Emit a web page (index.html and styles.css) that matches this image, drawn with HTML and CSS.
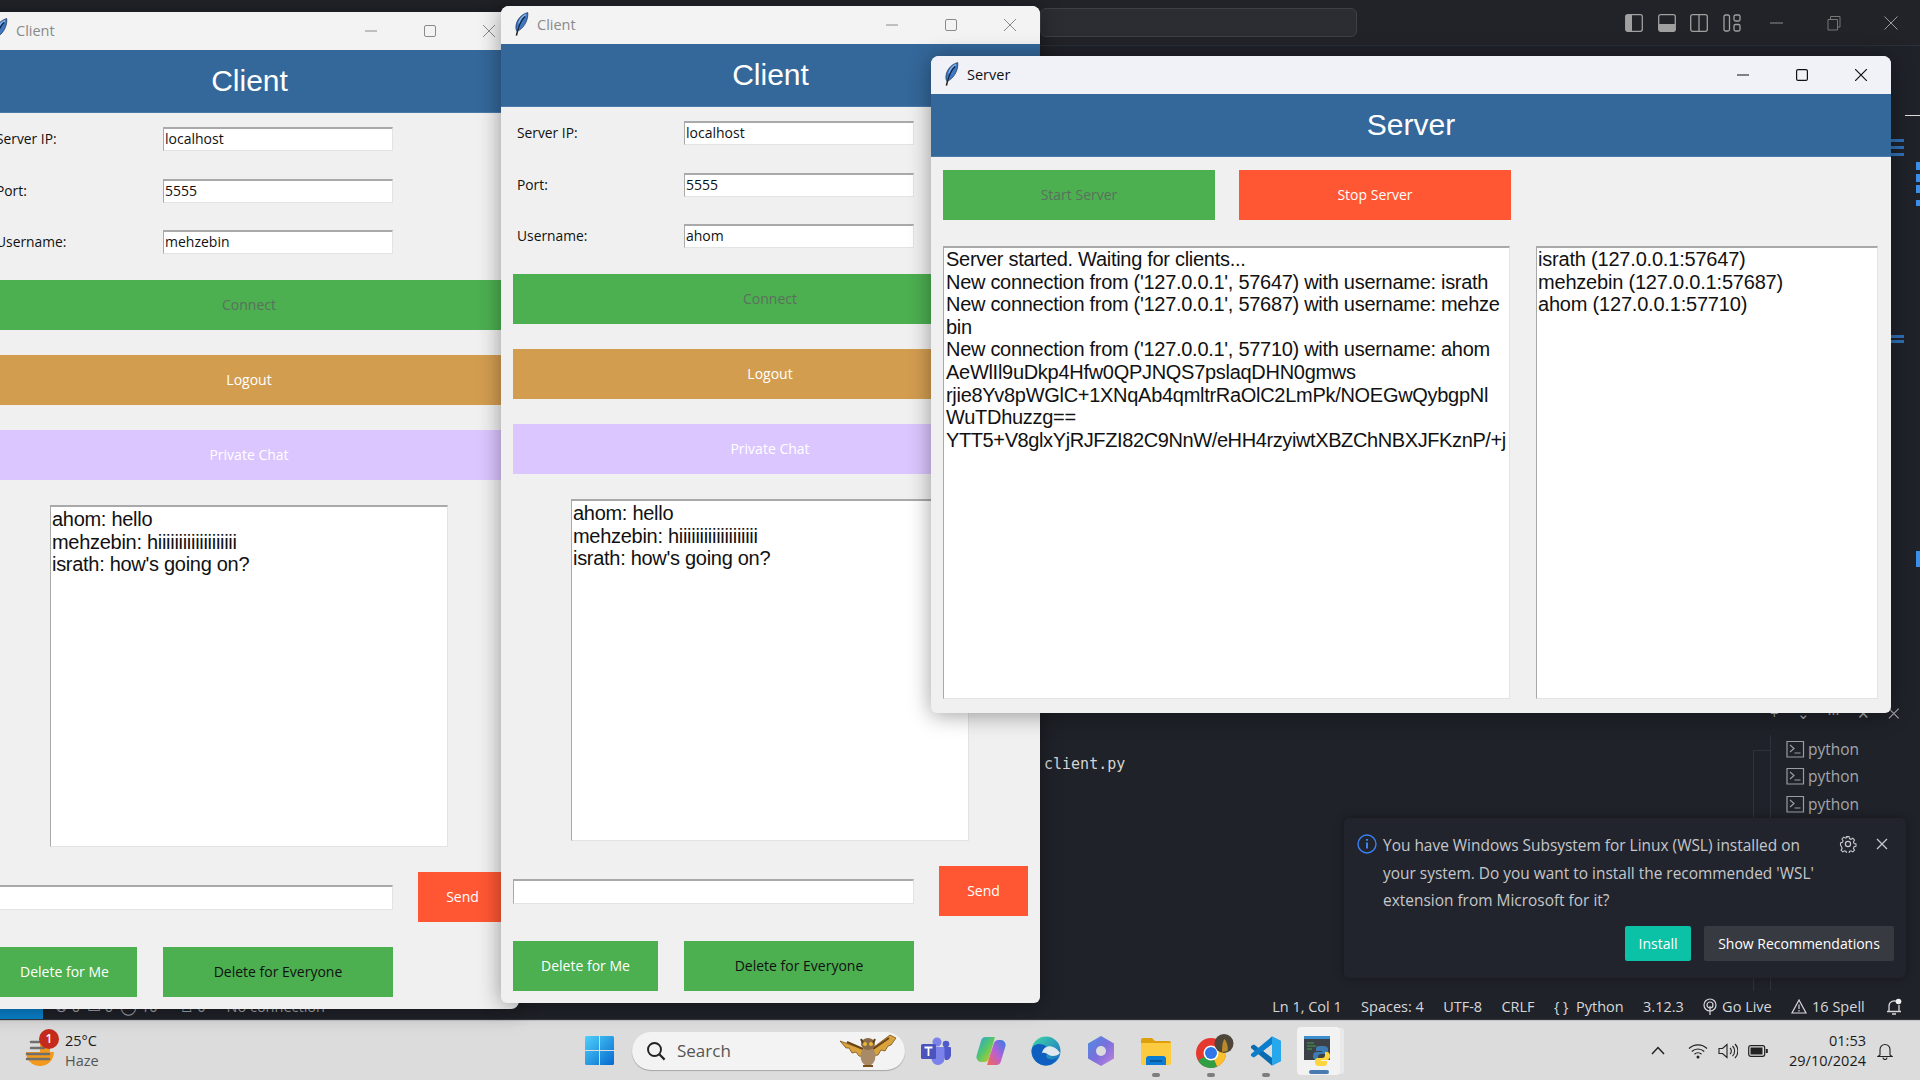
FILE: index.html
```html
<!DOCTYPE html>
<html lang="en">
<head>
  <meta charset="UTF-8">
  <title>Client and Server</title>
  <link rel="stylesheet" href="styles.css">
</head>
<body>

<svg class="defs" width="0" height="0">
  <defs>
    <symbol id="feather" viewBox="0 0 16 24">
      <path d="M13.800 .6C8 2 3 7 2 13.500c-.4 2.600 0 4.600 1 5.800C8.500 17.500 14.500 9.500 13.800 .6z" fill="#3f78c4" stroke="#1c2f4c" stroke-width=".7"/>
      <path d="M12 2.500C9.500 3.600 6 7 4.800 11.500" stroke="#8db8ea" stroke-width="1.300" fill="none"/>
      <path d="M11 4.500C7.500 8 5 13 3.400 19.800" stroke="#12233c" stroke-width="1.100" fill="none"/>
      <path d="M3.500 19L2.400 23.600" stroke="#222" stroke-width="1.500"/>
    </symbol>
    <symbol id="term" viewBox="0 0 20 20">
      <path d="M1 2.500h16.500v15.500h-16.500zM4 6l4 3.500-4 3.500M8.500 14h6" fill="none" stroke="#9a9da3" stroke-width="1.200"/>
    </symbol>
  </defs>
</svg>

<div class="desktop">
  <div class="vscode">
    <div class="vs-titlebar">
      <div class="vs-search"></div>
      <div class="vs-layout">
        <svg width="18" height="18" viewBox="0 0 18 18"><rect x=".7" y=".7" width="16.600" height="16.600" rx="2" fill="none" stroke="#a0a0a0" stroke-width="1.300"/><rect x="1" y="1" width="6" height="16" fill="#a0a0a0"/></svg>
        <svg width="18" height="18" viewBox="0 0 18 18"><rect x=".7" y=".7" width="16.600" height="16.600" rx="2" fill="none" stroke="#a0a0a0" stroke-width="1.300"/><rect x="1" y="10" width="16" height="7" fill="#a0a0a0"/></svg>
        <svg width="18" height="18" viewBox="0 0 18 18"><rect x=".7" y=".7" width="16.600" height="16.600" rx="2" fill="none" stroke="#a0a0a0" stroke-width="1.300"/><path d="M9 1v16" stroke="#a0a0a0" stroke-width="1.300"/></svg>
        <svg width="18" height="18" viewBox="0 0 18 18"><g fill="none" stroke="#a0a0a0" stroke-width="1.300"><rect x="1" y="1" width="5.500" height="16" rx="1.500"/><rect x="11" y="1" width="6" height="6" rx="1.500"/><rect x="11" y="10.500" width="6" height="6.500" rx="1.500"/></g></svg>
      </div>
      <div class="vs-controls">
        <svg width="14" height="14" viewBox="0 0 14 14"><path d="M0 7h13" stroke="#8e8e8e"/></svg>
        <svg width="14" height="16" viewBox="0 0 14 16"><path d="M1 4.500h9.500v10.500h-9.500zM3.500 4.500v-3h9.500v10.500h-2.500" fill="none" stroke="#777"/></svg>
        <svg width="14" height="14" viewBox="0 0 14 14"><path d="M.5 .5l13 13M13.500 .5l-13 13" stroke="#9a9a9a"/></svg>
      </div>
    </div>

    <div class="vs-main">
      <div class="minimap"></div>
      <div class="term-cmd">client.py</div>
      <div class="term-actions">
        <span>+</span><span>⌄</span><span>···</span><span>✕</span>
        <svg width="13" height="13" viewBox="0 0 13 13"><path d="M1 1l11 11M12 1l-11 11" stroke="#a9abb0" stroke-width="1.200"/></svg>
      </div>
      <div class="term-list">
        <div class="term-row"><svg width="20" height="20"><use href="#term"/></svg>python</div>
        <div class="term-row"><svg width="20" height="20"><use href="#term"/></svg>python</div>
        <div class="term-row"><svg width="20" height="20"><use href="#term"/></svg>python</div>
      </div>

      <div class="toast">
        <svg class="toast-info" width="20" height="20" viewBox="0 0 20 20"><circle cx="10" cy="10" r="9" fill="none" stroke="#3b82f6" stroke-width="1.400"/><path d="M10 8.500v6M10 5v1.800" stroke="#3b82f6" stroke-width="2"/></svg>
        <p class="toast-text">You have Windows Subsystem for Linux (WSL) installed on<br>your system. Do you want to install the recommended 'WSL'<br>extension from Microsoft for it?</p>
        <svg class="toast-gear" width="18" height="18" viewBox="0 0 18 18"><g fill="none" stroke="#c6c8cc" stroke-width="1.200"><circle cx="9" cy="9" r="2.600"/><path d="M7.600 1h2.800l.4 2.300 1.700.8 2-1.200 1.900 2-1.200 2 .7 1.700 2.100.6v2.500l-2.100.6-.7 1.700 1.200 2-1.900 1.900-2-1.200-1.700.7-.4 2.300h-2.800l-.4-2.300-1.700-.7-2 1.200-1.900-1.900 1.200-2-.7-1.700L1 10.500V8l2.100-.6.700-1.700-1.200-2 1.900-2 2 1.200 1.700-.8z" transform="translate(.6 .6) scale(.91)"/></g></svg>
        <svg class="toast-close" width="12" height="12" viewBox="0 0 12 12"><path d="M1 1l10 10M11 1l-10 10" stroke="#c6c8cc" stroke-width="1.300"/></svg>
        <div class="toast-actions">
          <button class="btn-install">Install</button>
          <button class="btn-recommend">Show Recommendations</button>
        </div>
      </div>
    </div>

    <div class="statusbar">
      <div class="status-left">
        <div class="remote"></div>
        <div class="status-dim">
          <span>⊗ 0</span><span>▭ 0</span><span>◯ 10</span><span class="status-ports">♙ 0</span><span>No connection</span>
        </div>
      </div>
      <div class="status-right">
        <span>Ln 1, Col 1</span>
        <span>Spaces: 4</span>
        <span>UTF-8</span>
        <span>CRLF</span>
        <span>{ }&nbsp; Python</span>
        <span>3.12.3</span>
        <span class="status-icon"><svg width="14" height="18" viewBox="0 0 14 18"><g fill="none" stroke="#d6d7da" stroke-width="1.200"><circle cx="7" cy="7" r="6"/><circle cx="7" cy="7" r="3"/><path d="M7 8v9"/></g></svg>Go Live</span>
        <span class="status-icon"><svg width="16" height="15" viewBox="0 0 16 15"><path d="M8 1l7 13h-14zM8 5.500v4.500M8 11v1.500" fill="none" stroke="#d6d7da" stroke-width="1.200"/></svg>16 Spell</span>
        <svg class="status-bell" width="16" height="18" viewBox="0 0 16 18"><path d="M3 13V8a5 5 0 0 1 8-4M13 7v6M1 13.500h14M6 16h4" fill="none" stroke="#d6d7da" stroke-width="1.300"/><circle cx="12.500" cy="3.500" r="2.800" fill="#f0f0f0"/></svg>
      </div>
    </div>
  </div>

  <div class="taskbar">
    <div class="weather">
      <div class="weather-icon">
        <svg width="32" height="32" viewBox="0 0 32 32"><path d="M2 13h28a14 14 0 0 1-28 0z" fill="#f39a1d"/><path d="M16 5h10v8h-10z" fill="#f39a1d"/><g stroke="#6f6f6f" stroke-width="2.600" stroke-linecap="round"><path d="M7 3h8M7 9h13M3 15h22M3 20h22"/></g></svg>
        <span class="badge">1</span>
      </div>
      <div class="weather-text"><span>25°C</span><span class="weather-sub">Haze</span></div>
    </div>

    <div class="task-center">
      <svg class="winlogo" width="29" height="29" viewBox="0 0 29 29"><defs><linearGradient id="wg" x1="0" y1="0" x2="1" y2="1"><stop offset="0" stop-color="#4fd0fb"/><stop offset="1" stop-color="#0569ce"/></linearGradient></defs><path d="M0 1.500a1.500 1.500 0 0 1 1.500-1.500H14v14H0zM15 0h12.500A1.500 1.500 0 0 1 29 1.500V14H15zM0 15h14v14H1.500A1.500 1.500 0 0 1 0 27.500zM15 15h14v12.500a1.500 1.500 0 0 1-1.500 1.500H15z" fill="url(#wg)"/></svg>

      <div class="search">
        <svg width="20" height="20" viewBox="0 0 20 20"><circle cx="8.500" cy="8.500" r="6.500" fill="none" stroke="#222" stroke-width="1.900"/><path d="M13.300 13.300l5.300 5.300" stroke="#222" stroke-width="2.200"/></svg>
        <span class="search-label">Search</span>
        <svg class="owl" width="58" height="36" viewBox="0 0 58 36"><path d="M27 17L1 8l6 7 3 0 3 5 4-1 3 4 8 1zM31 17L51 2l6 3-5 7-3 1-3 5-4-1-3 5-8 1z" fill="#d8a33c" stroke="#7a4f1c" stroke-width=".8"/><path d="M24 16L8 9M34 16L50 5" stroke="#6b4216" stroke-width="2"/><ellipse cx="29" cy="23" rx="7.500" ry="10" fill="#a98a66"/><ellipse cx="29" cy="11" rx="7" ry="6" fill="#8a6a48"/><path d="M22 6l2 4M36 6l-2 4" stroke="#5a3d20" stroke-width="2"/><circle cx="26" cy="11" r="2" fill="#e8b838"/><circle cx="32" cy="11" r="2" fill="#e8b838"/><path d="M24 33h10" stroke="#7a4f1c" stroke-width="2"/></svg>
      </div>

      <div class="apps">
        <div class="app">
          <svg width="30" height="28" viewBox="0 0 30 28"><circle cx="16" cy="5" r="4.500" fill="#7b83eb"/><circle cx="25" cy="7" r="3.300" fill="#5059c9"/><path d="M20 10h9a1 1 0 0 1 1 1v7a5 5 0 0 1-6 5z" fill="#5059c9"/><path d="M9 10h13a1.500 1.500 0 0 1 1.500 1.500V21a6.500 6.500 0 0 1-13 1z" fill="#7b83eb"/><rect x="0" y="7" width="15" height="15" rx="1.500" fill="#4b53bc"/><path d="M3.500 10.500h8M7.500 10.500v8.500" stroke="#fff" stroke-width="1.800"/></svg>
        </div>
        <div class="app">
          <svg width="30" height="30" viewBox="0 0 30 30"><defs><linearGradient id="cp1" x1="0" y1="0" x2="1" y2="1"><stop offset="0" stop-color="#1fa2e8"/><stop offset=".5" stop-color="#5ac864"/><stop offset="1" stop-color="#f5c21b"/></linearGradient><linearGradient id="cp2" x1="1" y1="0" x2="0" y2="1"><stop offset="0" stop-color="#2d7fe8"/><stop offset=".5" stop-color="#b75fd6"/><stop offset="1" stop-color="#f7684a"/></linearGradient></defs><path d="M10 1h9l-6 22a5 5 0 0 1-5 3H5a5 5 0 0 1-4.500-6L5 5a5 5 0 0 1 5-4z" fill="url(#cp1)"/><path d="M20 29h-9l7-22a5 5 0 0 1 5-3h2a5 5 0 0 1 4.500 6l-4.500 15a5 5 0 0 1-5 4z" fill="url(#cp2)"/></svg>
        </div>
        <div class="app">
          <svg width="30" height="30" viewBox="0 0 30 30"><defs><linearGradient id="eg" x1="0" y1="0" x2="1" y2="1"><stop offset="0" stop-color="#40d8a8"/><stop offset="1" stop-color="#1668c8"/></linearGradient></defs><circle cx="15" cy="15" r="14.500" fill="url(#eg)"/><path d="M.5 15C1 8 8 7 13 9c4 2 5 6 3 9-1 2-1 4 2 5 3 1 7 0 9-2-3 5-7 8.500-12 8.500C7 29.500.5 23 .5 15z" fill="#0f5fc0"/><path d="M11 17c1-5 6-8 11-6 3 1 5 3 7 6-2 3-8 4-11 2-2-1-4-3-7-2z" fill="#dfe8ee"/></svg>
        </div>
        <div class="app">
          <svg width="28" height="30" viewBox="0 0 28 30"><defs><linearGradient id="mg" x1="0" y1="0" x2="1" y2="1"><stop offset="0" stop-color="#4a8ee0"/><stop offset=".5" stop-color="#7a6fdc"/><stop offset="1" stop-color="#c583dc"/></linearGradient></defs><path d="M14 0l13 7.500v15L14 30 1 22.500v-15z" fill="url(#mg)"/><circle cx="14" cy="15" r="5" fill="#dcdcdc"/></svg>
        </div>
        <div class="app app-open">
          <svg width="30" height="28" viewBox="0 0 30 28"><path d="M0 3a2 2 0 0 1 2-2h9l3 3h14a2 2 0 0 1 2 2v3H0z" fill="#dd9f0a"/><path d="M0 6h30v20a2 2 0 0 1-2 2H2a2 2 0 0 1-2-2z" fill="#fccb3f"/><path d="M5 22a3 3 0 0 1 3-3h14a3 3 0 0 1 3 3v6H5z" fill="#0a7cd4"/><path d="M9 24h12" stroke="#0a4f8a" stroke-width="1.500"/></svg>
        </div>
        <div class="app app-open app-chrome">
          <svg width="38" height="34" viewBox="0 0 38 34"><circle cx="15" cy="19" r="15" fill="#e5392f"/><path d="M15 19L28 11a15 15 0 0 1-7 21.700z" fill="#fbc02d"/><path d="M15 19L21 32.700A15 15 0 0 1 2 26.500z" fill="#2f9e44"/><circle cx="15" cy="19" r="7.500" fill="#fff"/><circle cx="15" cy="19" r="6" fill="#2f76e8"/><circle cx="28" cy="9.500" r="9.500" fill="#4e463a"/><path d="M26 18c0-5 .5-11 2.500-13 2 2 4 8 3 12z" fill="#b88a2a"/></svg>
        </div>
        <div class="app app-open">
          <svg width="30" height="30" viewBox="0 0 30 30"><path d="M21 .5L30 5v20l-9 4.500L8 16.500z" fill="#0c7dcc"/><path d="M21 .5L30 5v20l-9 4.500z" fill="#27a7ec"/><path d="M21 8v14l-9-7z" fill="#dcdcdc"/><path d="M0 10l3-1.500L21 22v7.500L0 12z" fill="#0a6bb0"/><path d="M0 20l3 1.500L21 8V.5L0 18z" fill="#0c7dcc"/></svg>
        </div>
        <div class="app-active">
          <svg width="30" height="30" viewBox="0 0 30 30"><rect width="26" height="24" fill="#3c4147"/><rect width="26" height="3" fill="#3b8ed0"/><path d="M3 7h7M3 10h9M3 13h5" stroke="#3fa34d"/><path d="M16 10c-4 0-4 2-4 3v2h6v1h-6c-2 0-3 2-3 4s1 4 3 4h2v-3c0-2 1-3 3-3h4c2 0 3-1 3-3v-2c0-2-2-3-4-3z" fill="#3d7cb3"/><path d="M19 30c4 0 4-2 4-3v-2h-6v-1h6c2 0 3-2 3-4s-1-4-3-4h-2v3c0 2-1 3-3 3h-4c-2 0-3 1-3 3v2c0 2 2 3 4 3z" fill="#fcd53f"/></svg>
        </div>
      </div>
    </div>

    <div class="tray">
      <svg width="14" height="9" viewBox="0 0 14 9"><path d="M1 8l6-6.500L13 8" fill="none" stroke="#222" stroke-width="1.500"/></svg>
      <svg class="tray-wifi" width="20" height="16" viewBox="0 0 20 16"><g fill="none" stroke="#222" stroke-width="1.200"><path d="M1 5.500a13 13 0 0 1 18 0M3.800 8.500a9 9 0 0 1 12.400 0M6.500 11.200a5 5 0 0 1 7 0"/></g><circle cx="10" cy="14" r="1.500" fill="#222"/></svg>
      <svg width="20" height="16" viewBox="0 0 20 16"><g fill="none" stroke="#222" stroke-width="1.100"><path d="M1 5.500h3.500L9 1.500v13L4.500 10.500H1zM12 5a4 4 0 0 1 0 6M14.500 3a7 7 0 0 1 0 10M17 1a10 10 0 0 1 0 14"/></g></svg>
      <svg width="20" height="12" viewBox="0 0 20 12"><rect x=".7" y=".7" width="16" height="10.600" rx="2" fill="none" stroke="#222" stroke-width="1.200"/><rect x="2.500" y="2.500" width="12" height="7" fill="#222"/><rect x="17.800" y="4" width="2" height="4" fill="#222"/></svg>
      <div class="clock"><span>01:53</span><span>29/10/2024</span></div>
      <svg width="16" height="18" viewBox="0 0 16 18"><path d="M3 13V7.500a5 5 0 0 1 10 0V13l2 1.500H1zM6 15.500a2 2 0 0 0 4 0" fill="none" stroke="#222" stroke-width="1.100"/></svg>
    </div>
  </div>
</div>

<!-- windows on the desktop -->
<div class="window client-back">
  <div class="win-title inactive">
    <svg class="feather" width="16" height="24"><use href="#feather"/></svg>
    <span class="win-name">Client</span>
    <div class="win-controls">
      <svg width="12" height="12" viewBox="0 0 12 12"><path d="M0 6h12" stroke="#8a8a8a"/></svg>
      <svg width="12" height="12" viewBox="0 0 12 12"><rect x=".5" y=".5" width="11" height="11" rx="1.500" fill="none" stroke="#8a8a8a"/></svg>
      <svg width="12" height="12" viewBox="0 0 12 12"><path d="M0 0l12 12M12 0L0 12" stroke="#8a8a8a"/></svg>
    </div>
  </div>
  <div class="win-header">Client</div>
  <div class="client-body">
    <div class="form">
      <label>Server IP:</label><div class="entry">localhost</div>
      <label>Port:</label><div class="entry">5555</div>
      <label>Username:</label><div class="entry">mehzebin</div>
    </div>
    <div class="btn green disabled">Connect</div>
    <div class="btn orange">Logout</div>
    <div class="btn purple">Private Chat</div>
    <div class="chat">ahom: hello<br>mehzebin: hiiiiiiiiiiiiiiiiiii<br>israth: how's going on?</div>
    <div class="send-row"><div class="entry msg"></div><div class="btn red send">Send</div></div>
    <div class="delete-row"><div class="btn green del-me">Delete for Me</div><div class="btn green del-all">Delete for Everyone</div></div>
  </div>
</div>

<div class="window client-front">
  <div class="win-title inactive">
    <svg class="feather" width="16" height="24"><use href="#feather"/></svg>
    <span class="win-name">Client</span>
    <div class="win-controls">
      <svg width="12" height="12" viewBox="0 0 12 12"><path d="M0 6h12" stroke="#8a8a8a"/></svg>
      <svg width="12" height="12" viewBox="0 0 12 12"><rect x=".5" y=".5" width="11" height="11" rx="1.500" fill="none" stroke="#8a8a8a"/></svg>
      <svg width="12" height="12" viewBox="0 0 12 12"><path d="M0 0l12 12M12 0L0 12" stroke="#8a8a8a"/></svg>
    </div>
  </div>
  <div class="win-header">Client</div>
  <div class="client-body">
    <div class="form">
      <label>Server IP:</label><div class="entry">localhost</div>
      <label>Port:</label><div class="entry">5555</div>
      <label>Username:</label><div class="entry">ahom</div>
    </div>
    <div class="btn green disabled">Connect</div>
    <div class="btn orange">Logout</div>
    <div class="btn purple">Private Chat</div>
    <div class="chat">ahom: hello<br>mehzebin: hiiiiiiiiiiiiiiiiiii<br>israth: how's going on?</div>
    <div class="send-row"><div class="entry msg"></div><div class="btn red send">Send</div></div>
    <div class="delete-row"><div class="btn green del-me">Delete for Me</div><div class="btn green del-all">Delete for Everyone</div></div>
  </div>
</div>

<div class="window server">
  <div class="win-title active">
    <svg class="feather" width="16" height="24"><use href="#feather"/></svg>
    <span class="win-name">Server</span>
    <div class="win-controls">
      <svg width="12" height="12" viewBox="0 0 12 12"><path d="M0 6h12" stroke="#111" stroke-width="1.200"/></svg>
      <svg width="12" height="12" viewBox="0 0 12 12"><rect x=".6" y=".6" width="10.800" height="10.800" rx="1.500" fill="none" stroke="#111" stroke-width="1.200"/></svg>
      <svg width="12" height="12" viewBox="0 0 12 12"><path d="M0 0l12 12M12 0L0 12" stroke="#111" stroke-width="1.200"/></svg>
    </div>
  </div>
  <div class="win-header">Server</div>
  <div class="server-body">
    <div class="server-btns">
      <div class="btn green disabled start">Start Server</div>
      <div class="btn red stop">Stop Server</div>
    </div>
    <div class="server-panes">
      <div class="log">Server started. Waiting for clients...<br>New connection from ('127.0.0.1', 57647) with username: israth<br>New connection from ('127.0.0.1', 57687) with username: mehze<br>bin<br>New connection from ('127.0.0.1', 57710) with username: ahom<br>AeWlIl9uDkp4Hfw0QPJNQS7pslaqDHN0gmws<br>rjie8Yv8pWGlC+1XNqAb4qmltrRaOlC2LmPk/NOEGwQybgpNl<br>WuTDhuzzg==<br><span class="log-tight">YTT5+V8glxYjRJFZI82C9NnW/eHH4rzyiwtXBZChNBXJFKznP/+j</span></div>
      <div class="clients">israth (127.0.0.1:57647)<br>mehzebin (127.0.0.1:57687)<br>ahom (127.0.0.1:57710)</div>
    </div>
  </div>
</div>

</body>
</html>
```

FILE: styles.css
```css
* {
  box-sizing: border-box;
}
html, body {
  margin: 0;
  height: 100%;
}
body {
  width: 1920px;
  height: 1080px;
  overflow: hidden;
  position: relative;
  font-family: "Open Sans", sans-serif;
  background-color: #1f2229;
}
.defs {
  position: absolute;
}
.desktop {
  height: 1080px;
  display: flex;
  flex-direction: column;
}

/* vscode behind the windows */
.vscode {
  flex: 1;
  display: flex;
  flex-direction: column;
  color: #d6d7da;
}
.vs-titlebar {
  height: 46px;
  display: flex;
  align-items: center;
  padding-left: 1040px;
  background-color: #212329;
  border-bottom: 1px solid #2c2f35;
}
.vs-search {
  width: 317px;
  height: 29px;
  background-color: #2b2d33;
  border: 1px solid #3e4046;
  border-radius: 6px;
  margin-top: -1px;
}
.vs-layout {
  display: flex;
  gap: 14.500px;
  margin-left: 268px;
}
.vs-controls {
  display: flex;
  align-items: center;
  gap: 43px;
  margin-left: 29px;
}
.vs-main {
  flex: 1;
  position: relative;
}
.minimap {
  position: absolute;
  right: 0;
  top: 60px;
  width: 30px;
  height: 520px;
  background-image:
    linear-gradient(#dcdcdc, #dcdcdc),
    linear-gradient(#2f6fb5, #2f6fb5),
    linear-gradient(#2f6fb5, #2f6fb5),
    linear-gradient(#2f6fb5, #2f6fb5),
    linear-gradient(#3b8eea, #3b8eea),
    linear-gradient(#3b8eea, #3b8eea),
    linear-gradient(#3b8eea, #3b8eea),
    linear-gradient(#3b8eea, #3b8eea),
    linear-gradient(#3b8eea, #3b8eea),
    linear-gradient(#2f6fb5, #2f6fb5),
    linear-gradient(#2f6fb5, #2f6fb5);
  background-size: 15px 1px, 14px 3px, 14px 3px, 14px 3px, 4px 8px, 4px 8px, 4px 8px, 4px 6px, 4px 16px, 14px 3px, 14px 3px;
  background-position: 15px 9px, 0 33px, 0 40px, 0 47px, 26px 56px, 26px 68px, 26px 79px, 26px 94px, 26px 445px, 0 229px, 0 234px;
  background-repeat: no-repeat;
}
.term-cmd {
  position: absolute;
  left: 1044px;
  top: 709px;
  font-family: "DejaVu Sans Mono", monospace;
  font-size: 15px;
  color: #d4d4d4;
}
.term-actions {
  position: absolute;
  left: 1770px;
  top: 657px;
  display: flex;
  align-items: center;
  gap: 18px;
  font-size: 15px;
  color: #a9abb0;
  width: 130px;
  justify-content: flex-end;
}
.term-list {
  position: absolute;
  left: 1770px;
  top: 689px;
  height: 255px;
  width: 130px;
  padding-left: 15px;
  border-left: 1px solid #2f323a;
}
.term-list::before {
  content: "";
  position: absolute;
  left: -18px;
  top: 15px;
  width: 17px;
  height: 240px;
  border-left: 1px solid #2f323a;
  border-top: 1px solid #2f323a;
}
.term-row {
  height: 27.500px;
  display: flex;
  align-items: center;
  gap: 2px;
  font-size: 15.500px;
  color: #a4a6ab;
}
.toast {
  position: absolute;
  left: 1344px;
  top: 772px;
  width: 562px;
  height: 160px;
  background-color: #21242d;
  border-radius: 5px;
  box-shadow: 0 0 8px rgba(0,0,0,0.35);
}
.toast-info {
  position: absolute;
  left: 13px;
  top: 16px;
}
.toast-text {
  position: absolute;
  left: 39px;
  top: 14px;
  margin: 0;
  font-size: 15.450px;
  line-height: 27.500px;
  white-space: nowrap;
  color: #c5c7cb;
}
.toast-gear {
  position: absolute;
  left: 495px;
  top: 17px;
}
.toast-close {
  position: absolute;
  left: 532px;
  top: 20px;
}
.toast-actions {
  position: absolute;
  top: 108px;
  right: 12px;
  display: flex;
  gap: 13px;
}
.toast-actions button {
  height: 35px;
  border: 0;
  border-radius: 2px;
  font-family: "Open Sans", sans-serif;
  font-size: 14px;
  color: #fff;
}
.btn-install {
  width: 66px;
  background-color: #0bc1a6;
}
.btn-recommend {
  width: 190px;
  background-color: #373a41;
}
.statusbar {
  height: 34px;
  display: flex;
  align-items: stretch;
  justify-content: space-between;
  background-color: #1f2229;
  border-bottom: 1px solid #34373d;
  font-size: 14.500px;
}
.status-left {
  display: flex;
  align-items: stretch;
}
.remote {
  width: 43px;
  background-color: #0a84d0;
}
.status-dim {
  display: flex;
  align-items: center;
  gap: 7px;
  padding-top: 8px;
  margin-left: 12px;
  color: #a4a6ab;
  white-space: nowrap;
}
.status-ports {
  margin-left: 16px;
  margin-right: 14px;
}
.status-right {
  display: flex;
  align-items: center;
  gap: 19.300px;
  padding-top: 8px;
  padding-right: 18px;
}
.status-icon {
  display: flex;
  align-items: center;
  gap: 5px;
}
.status-bell {
  margin-left: 2px;
}

/* taskbar */
.taskbar {
  height: 60px;
  display: flex;
  align-items: center;
  position: relative;
  background-color: #dcdcdc;
  border-top: 1px solid #c4c4c6;
}
.weather {
  display: flex;
  align-items: center;
  gap: 9px;
  margin-left: 24px;
  width: 561px;
}
.weather-icon {
  position: relative;
  width: 32px;
  height: 32px;
  margin-top: 8px;
}
.badge {
  position: absolute;
  top: -10px;
  left: 15px;
  width: 20px;
  height: 20px;
  border-radius: 50%;
  background-color: #c42b1c;
  color: #fff;
  font-size: 12px;
  font-weight: 600;
  line-height: 20px;
  text-align: center;
}
.weather-text {
  display: flex;
  flex-direction: column;
  font-size: 14.500px;
  line-height: 20px;
  color: #1a1a1a;
}
.weather-sub {
  color: #555;
}
.task-center {
  display: flex;
  align-items: center;
}
.search {
  width: 273px;
  height: 38px;
  margin-left: 18px;
  display: flex;
  align-items: center;
  background-color: #f3f3f3;
  border-radius: 19px;
  box-shadow: 0 1px 1px rgba(0,0,0,0.25);
  padding-left: 14px;
}
.search-label {
  margin-left: 11px;
  font-size: 17px;
  color: #555;
}
.owl {
  margin-left: auto;
  margin-right: 8px;
}
.apps {
  display: flex;
  align-items: center;
  margin-left: 3px;
}
.app {
  width: 55px;
  height: 48px;
  display: flex;
  align-items: center;
  justify-content: center;
  position: relative;
}
.app-chrome svg {
  margin-left: 9px;
}
.app-open::after {
  content: "";
  position: absolute;
  bottom: -2px;
  left: 50%;
  width: 8px;
  height: 4px;
  margin-left: -4px;
  border-radius: 2px;
  background-color: #7e7e7e;
}
.app-active {
  width: 43px;
  height: 48px;
  margin-left: 4px;
  display: flex;
  align-items: center;
  justify-content: center;
  position: relative;
  background-color: #f2f2f2;
  border-radius: 4px;
  box-shadow: 5px 0 0 -1px #e9e9e9;
}
.app-active::after {
  content: "";
  position: absolute;
  bottom: 1px;
  left: 50%;
  width: 20px;
  height: 4px;
  margin-left: -10px;
  border-radius: 2px;
  background-color: #4a7bb0;
}
.tray {
  display: flex;
  align-items: center;
  gap: 10px;
  margin-left: auto;
  padding-right: 27px;
  color: #1a1a1a;
}
.tray-wifi {
  margin-left: 13px;
}
.clock {
  display: flex;
  flex-direction: column;
  align-items: flex-end;
  width: 88px;
  font-size: 14.500px;
  line-height: 20px;
  margin-right: 1px;
}

/* tk windows */
.window {
  position: absolute;
  display: flex;
  flex-direction: column;
  background-color: #f0f0f0;
  border-radius: 8px 8px 6px 6px;
  overflow: hidden;
  box-shadow: 0 2px 22px rgba(0,0,0,0.38);
}
.client-back {
  left: -20px;
  top: 12px;
  width: 539px;
  height: 997px;
  border-radius: 0 0 8px 0;
}
.client-front {
  left: 501px;
  top: 6px;
  width: 539px;
  height: 997px;
}
.server {
  left: 931px;
  top: 56px;
  width: 960px;
  height: 657px;
}
.win-title {
  height: 38px;
  flex: none;
  display: flex;
  align-items: center;
  padding-left: 13px;
  font-size: 14.500px;
}
.win-title.inactive {
  background-color: #f3f3f3;
  color: #8a8a8a;
}
.win-title.active {
  background-color: #f0f2f8;
  color: #111;
}
.feather {
  margin-top: -3px;
}
.win-name {
  margin-left: 7px;
  margin-top: -2px;
}
.win-controls {
  margin-left: auto;
  display: flex;
  gap: 47px;
  padding-right: 24px;
}
.win-header {
  height: 63px;
  flex: none;
  display: flex;
  align-items: center;
  justify-content: center;
  background-color: #34679a;
  border-bottom: 1px solid #4a7aaa;
  color: #fff;
  font-family: "Liberation Sans", Arial, sans-serif;
  font-size: 30px;
}
.client-body {
  display: flex;
  flex-direction: column;
  padding: 14px 12px 0 12px;
}
.form {
  display: grid;
  grid-template-columns: 167px 230px;
  grid-auto-rows: 24px;
  row-gap: 27.500px;
  align-items: center;
  padding-left: 4px;
  margin-bottom: 26px;
}
.form label {
  font-size: 13.800px;
  margin-top: -1px;
  color: #111;
}
.entry {
  height: 24px;
  padding-left: 1px;
  background-color: #fff;
  border: 1px solid #e3e3e3;
  border-top: 2px solid #a9a9a9;
  border-left: 1px solid #a9a9a9;
  font-size: 14px;
  line-height: 20px;
  color: #111;
}
.btn {
  display: flex;
  align-items: center;
  justify-content: center;
  height: 50px;
  padding-bottom: 2px;
  font-size: 14px;
  color: #fff;
}
.client-body > .btn {
  width: 514px;
  margin-bottom: 25px;
}
.green {
  background-color: #4caf50;
}
.orange {
  background-color: #d39d50;
}
.purple {
  background-color: #dcc6ff;
}
.red {
  background-color: #ff5733;
}
.btn.disabled {
  color: #5c6f5e;
}
.chat, .log, .clients {
  background-color: #fff;
  border: 1px solid #e3e3e3;
  border-top: 2px solid #a9a9a9;
  border-left: 1px solid #a9a9a9;
  padding-left: 1px;
  font-family: "Liberation Sans", Arial, sans-serif;
  font-size: 20px;
  letter-spacing: -0.290px;
  line-height: 22.600px;
  color: #111;
  white-space: nowrap;
  overflow: hidden;
}
.chat {
  width: 398px;
  height: 342px;
  margin-left: 58px;
  padding-top: 1px;
}
.send-row {
  display: flex;
  align-items: center;
  margin-top: 25px;
  height: 50px;
}
.msg {
  width: 401px;
  height: 25px;
}
.client-body .send {
  width: 89px;
  margin-left: 25px;
}
.delete-row {
  display: flex;
  gap: 26px;
  margin-top: 25px;
}
.del-me {
  width: 145px;
}
.del-all {
  width: 230px;
  color: #111;
}
.server-body {
  flex: 1;
  display: flex;
  flex-direction: column;
  padding: 13px 13px 14px 12px;
}
.server-btns {
  display: flex;
  gap: 24px;
  margin-bottom: 26px;
}
.start, .stop {
  width: 272px;
}
.server-panes {
  display: flex;
  gap: 26px;
  height: 453px;
}
.log {
  width: 567px;
  padding-left: 2px;
}
.log-tight {
  letter-spacing: -0.390px;
}
.clients {
  width: 342px;
  letter-spacing: -0.200px;
}
```
